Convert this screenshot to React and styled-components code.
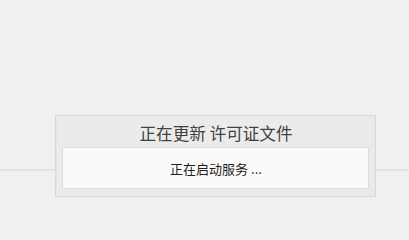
import React from "react";
import styled, { createGlobalStyle } from "styled-components";

const GlobalStyle = createGlobalStyle`
	html, body {
		margin: 0;
		padding: 0;
		background: #f0f0f0;
	}
	body {
		font-family: "Noto Sans CJK SC", "Noto Sans", sans-serif;
	}
`;

function App() {
	return (
		<Page>
			<GlobalStyle />
			<TopArea />
			<BottomArea />
			<Dialog>
				<Title>正在更新 许可证文件</Title>
				<StatusBox>
					<Status>正在启动服务 ...</Status>
				</StatusBox>
			</Dialog>
		</Page>
	);
}

export default App;

const Page = styled.div`
	position: relative;
	width: 409px;
	height: 229px;
	overflow: hidden;
	display: flex;
	flex-direction: column;
`;
const TopArea = styled.div`
	height: 169px;
	border-bottom: 2px solid #e2e2e2;
	background: #f0f0f0;
`;
const BottomArea = styled.div`
	flex: 1;
	background: #f0f0f0;
`;
const Dialog = styled.div`
	position: absolute;
	left: 55px;
	top: 115px;
	width: 321px;
	height: 82px;
	box-sizing: border-box;
	border: 1px solid #d9d9d9;
	box-shadow: inset 0 0 0 1px #e6e6e6;
	background: #ebebeb;
	padding: 0 6px 7px;
	display: flex;
	flex-direction: column;
`;
const Title = styled.div`
	height: 31px;
	display: flex;
	align-items: center;
	justify-content: center;
	font-size: 16.6px;
	color: #404040;
	padding-top: 2px;
	padding-left: 1px;
	box-sizing: border-box;
`;
const StatusBox = styled.div`
	flex: 1;
	border: 1px solid #dcdcdc;
	background: #fafafa;
	display: flex;
	align-items: center;
	justify-content: center;
`;
const Status = styled.span`
	font-size: 13px;
	color: #1e1e1e;
	padding-left: 1px;
`;
